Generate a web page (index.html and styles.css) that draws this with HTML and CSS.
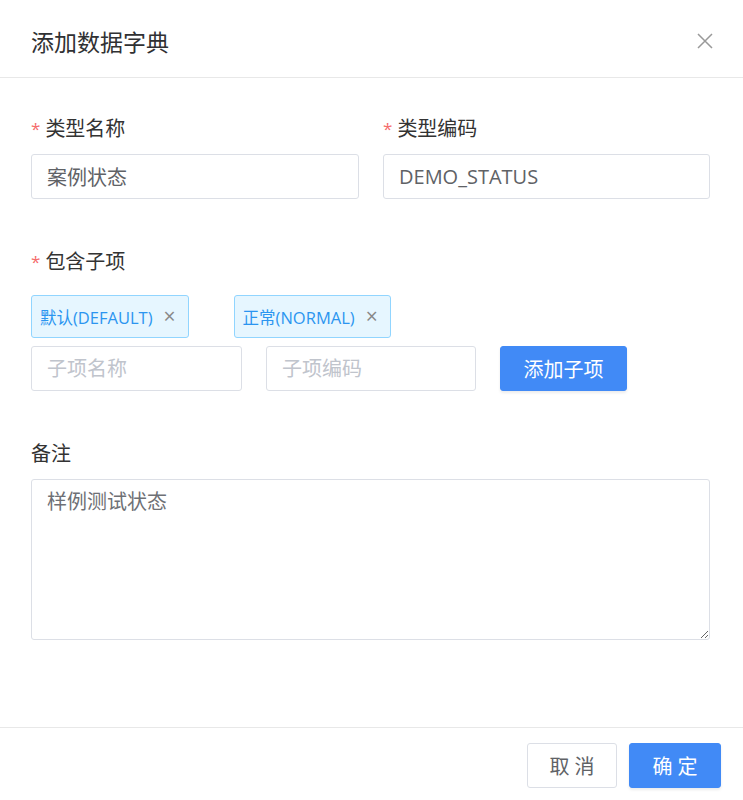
FILE: index.html
```html
<!DOCTYPE html>
<html lang="zh-CN">
<head>
  <meta charset="UTF-8" />
  <title>添加数据字典</title>
  <link rel="stylesheet" href="styles.css">
</head>
<body>
  <div class="dialog">
    <div class="dialog-header">
      <span class="dialog-title">添加数据字典</span>
      <button class="close" type="button">
        <svg width="16" height="16" viewBox="0 0 16 16"><path d="M1 1L15 15M15 1L1 15" stroke="#999" stroke-width="1.5" fill="none"/></svg>
      </button>
    </div>

    <div class="dialog-body">
      <div class="row two">
        <div class="field">
          <label class="label required">类型名称</label>
          <input class="input" type="text" value="案例状态" />
        </div>
        <div class="field">
          <label class="label required">类型编码</label>
          <input class="input" type="text" value="DEMO_STATUS" />
        </div>
      </div>

      <div class="field items">
        <label class="label required">包含子项</label>
        <div class="tags">
          <span class="tag">默认(DEFAULT)<i class="tag-close">×</i></span>
          <span class="tag">正常(NORMAL)<i class="tag-close">×</i></span>
        </div>
        <div class="add-row">
          <input class="input small" type="text" placeholder="子项名称" />
          <input class="input small" type="text" placeholder="子项编码" />
          <button class="btn primary" type="button">添加子项</button>
        </div>
      </div>

      <div class="field remark">
        <label class="label">备注</label>
        <textarea class="textarea">样例测试状态</textarea>
      </div>
    </div>

    <div class="dialog-footer">
      <button class="btn" type="button">取 消</button>
      <button class="btn primary" type="button">确 定</button>
    </div>
  </div>
</body>
</html>
```

FILE: styles.css
```css
* { box-sizing: border-box; }
body { margin: 0; background: #fff; font-family: "Open Sans", "Noto Sans CJK SC", sans-serif; color: #333; }
.dialog { width: 743px; height: 800px; display: flex; flex-direction: column; }

.dialog-header { height: 78px; border-bottom: 1px solid #e8e8e8; padding: 4px 30px 0 31px; display: flex; align-items: center; justify-content: space-between; }
.dialog-title { font-size: 23px; color: #303133; }
.close { border: 0; background: none; padding: 0; width: 16px; height: 16px; cursor: pointer; }

.dialog-body { flex: 1; padding: 38px 33px 0 31px; }
.row.two { display: grid; grid-template-columns: 328px 327px; gap: 24px; }
.field { display: flex; flex-direction: column; }
.label { font-size: 20px; line-height: 26px; color: #333; margin-bottom: 12px; }
.label.required::before { content: "*"; color: #f56c6c; margin-right: 5px; font-size: 17px; vertical-align: 1px; }

.input { height: 45px; border: 1px solid #dcdfe6; border-radius: 3px; padding: 0 15px; font: inherit; font-size: 20px; color: #606266; outline: none; }
.input::placeholder { color: #c0c4cc; }
.input.small { width: 211px; }
.input.small + .input.small { width: 210px; }

.items { margin-top: 50px; }
.tags { display: flex; gap: 45px; margin-top: 8px; }
.tag { height: 43px; display: inline-flex; align-items: center; padding: 0 12px 0 8px; background: #e6f6ff; border: 1px solid #91d5ff; border-radius: 3px; color: #2b95f0; font-size: 16.5px; }
.tag-close { font-style: normal; color: #888; font-size: 21px; margin-left: 11px; line-height: 1; }
.add-row { display: flex; gap: 24px; margin-top: 8px; }

.btn { height: 45px; border: 1px solid #dcdfe6; border-radius: 3px; background: #fff; font: inherit; font-size: 20px; color: #606266; padding: 0 20px; cursor: pointer; }
.btn.primary { background: #418af6; border-color: #418af6; color: #fff; box-shadow: 0 2px 3px rgba(0,0,0,0.08); }
.add-row .btn { width: 127px; padding: 0; }

.remark { margin-top: 50px; }
.textarea { height: 161px; border: 1px solid #dcdfe6; border-radius: 3px; padding: 6px 15px; font: inherit; font-size: 20px; color: #6e7075; resize: vertical; outline: none; }

.dialog-footer { height: 73px; border-top: 1px solid #e8e8e8; display: flex; justify-content: flex-end; align-items: flex-start; gap: 12px; padding: 15px 22px 0 0; }
.dialog-footer .btn { width: 90px; padding: 0; }
.dialog-footer .btn.primary { width: 92px; }
```
